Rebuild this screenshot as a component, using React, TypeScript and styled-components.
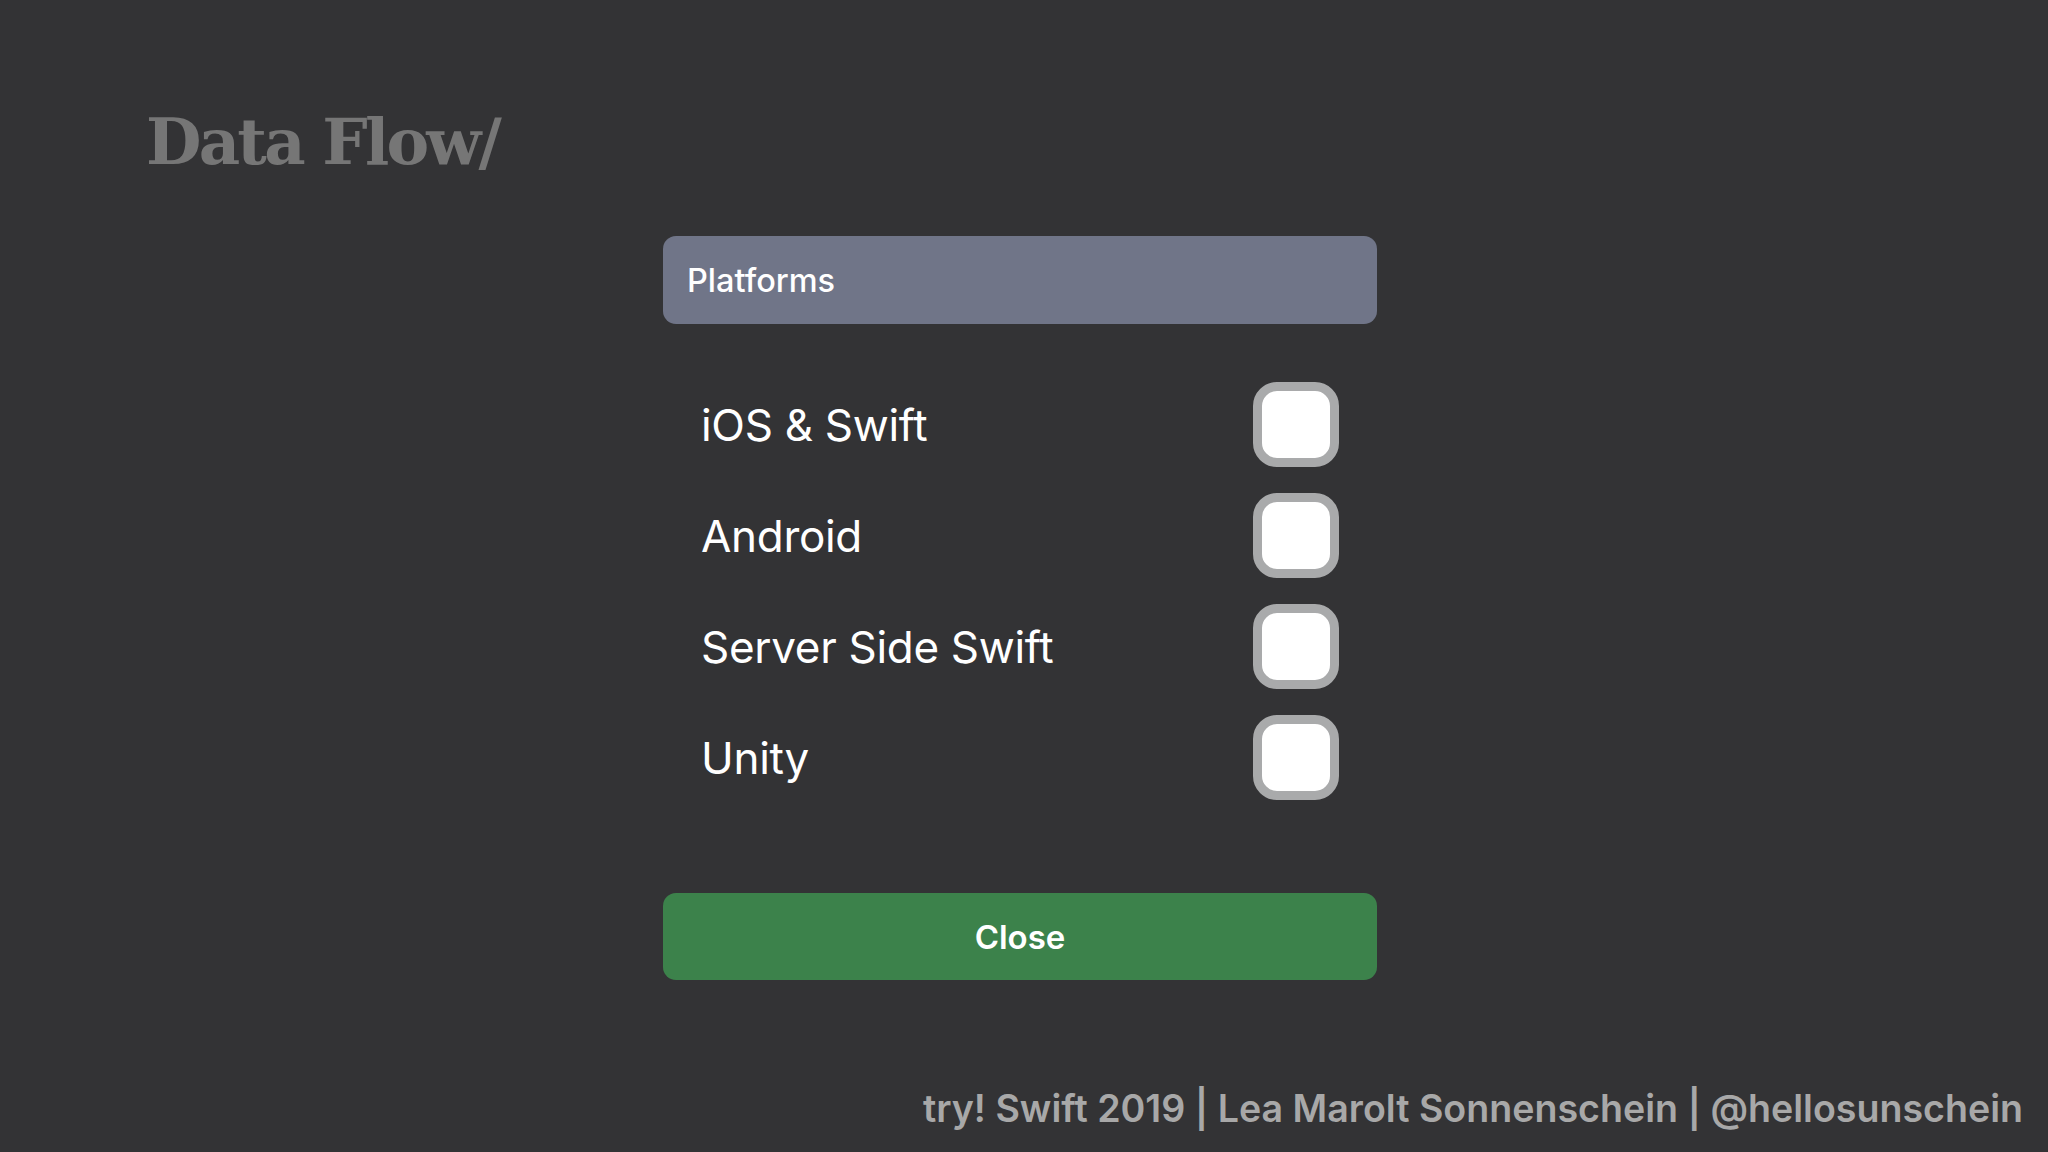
import { useState } from 'react';
import styled, { createGlobalStyle } from 'styled-components';

const GlobalStyle = createGlobalStyle`
    html, body {
        margin: 0;
        padding: 0;
        background-color: #333335;
    }
    * {
        box-sizing: border-box;
    }
`;

const Page = styled.div`
    display: flex;
    flex-direction: column;
    width: 2048px;
    height: 1152px;
    background-color: #333335;
    font-family: Inter, "Noto Sans", sans-serif;
    overflow: hidden;
`;

const Title = styled.h1`
    margin: 110px 0 0 146px;
    font-family: "DejaVu Serif", serif;
    font-weight: 700;
    font-size: 64px;
    line-height: 64px;
    color: #767676;
    letter-spacing: -2.8px;
`;

const Panel = styled.div`
    display: flex;
    flex-direction: column;
    width: 714px;
    margin: 62px auto 0;
    position: relative;
    left: -4px;
`;

const Header = styled.div`
    display: flex;
    align-items: center;
    height: 88px;
    padding: 0 24px;
    border-radius: 13px;
    background-color: #707588;
    color: #ffffff;
    font-size: 32.5px;
    font-weight: 500;
`;

const List = styled.ul`
    list-style: none;
    margin: 45px 0 0;
    padding: 0;
`;

const Row = styled.li`
    display: flex;
    align-items: center;
    justify-content: space-between;
    height: 111px;
    padding: 0 38px;
`;

const Label = styled.span`
    color: #ffffff;
    font-size: 44px;
    font-weight: 400;
    letter-spacing: -0.3px;
`;

const CheckBox = styled.button<{ $checked: boolean }>`
    width: 86px;
    height: 85px;
    padding: 0;
    border: 9px solid #a9aaab;
    border-radius: 24px;
    background-color: ${(props) => (props.$checked ? '#3c824b' : '#ffffff')};
    cursor: pointer;
`;

const CloseBtn = styled.button`
    display: flex;
    align-items: center;
    justify-content: center;
    height: 87px;
    margin-top: 80px;
    border: none;
    border-radius: 13px;
    background-color: #3c824b;
    color: #ffffff;
    font-family: Inter, "Noto Sans", sans-serif;
    font-size: 33px;
    font-weight: 600;
    cursor: pointer;
`;

const Footer = styled.div`
    margin-top: auto;
    padding: 0 25px 21px 0;
    text-align: right;
    color: #a8a8a8;
    font-size: 37.6px;
    font-weight: 600;
    line-height: 44px;
`;

const platforms = ['iOS & Swift', 'Android', 'Server Side Swift', 'Unity'];

function App() {
    const [checked, setChecked] = useState<string[]>([]);

    const toggle = (name: string) => {
        setChecked((old) =>
            old.includes(name) ? old.filter((one) => one !== name) : [...old, name]
        );
    };

    return (
        <>
            <GlobalStyle />
            <Page>
                <Title>Data Flow/</Title>
                <Panel>
                    <Header>Platforms</Header>
                    <List>
                        {platforms.map((name) => (
                            <Row key={name}>
                                <Label>{name}</Label>
                                <CheckBox
                                    $checked={checked.includes(name)}
                                    onClick={() => toggle(name)}
                                />
                            </Row>
                        ))}
                    </List>
                    <CloseBtn>Close</CloseBtn>
                </Panel>
                <Footer>try! Swift 2019 | Lea Marolt Sonnenschein | @hellosunschein</Footer>
            </Page>
        </>
    );
}

export default App;
